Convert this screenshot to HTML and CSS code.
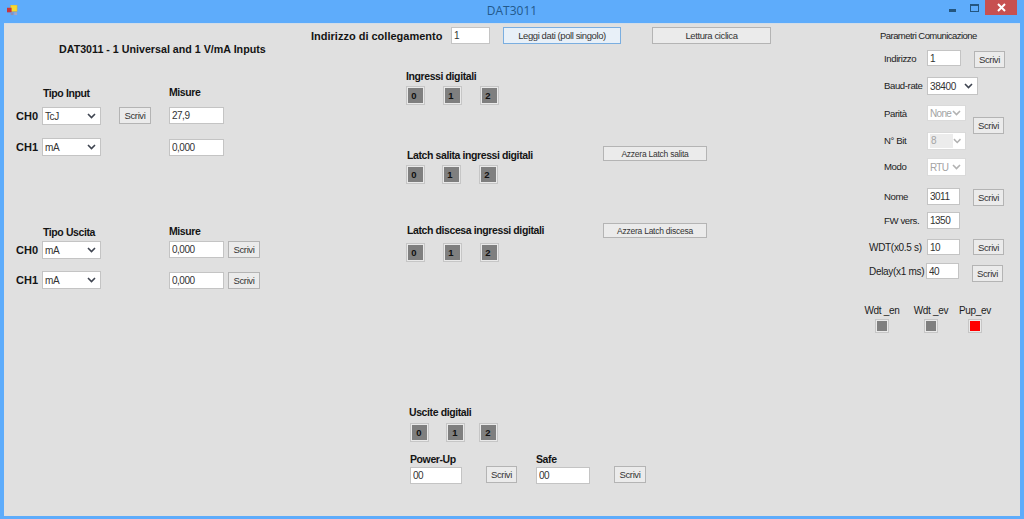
FILE: index.html
```html
<!DOCTYPE html>
<html lang="it">
<head>
<meta charset="utf-8">
<title>DAT3011</title>
<link rel="stylesheet" href="styles.css">
</head>
<body>
<svg class="defs" width="0" height="0" aria-hidden="true">
  <symbol id="chev" viewBox="0 0 9 6"><path d="M1 1 L4.5 4.5 L8 1" fill="none" stroke="currentColor" stroke-width="1.6"/></symbol>
</svg>
<div class="window">
  <header class="titlebar">
    <div class="appicon">
      <svg width="11" height="11" viewBox="0 0 12 12">
        <rect x="4" y="0" width="7" height="7" fill="#f6d92e" stroke="#c9a94a" stroke-width=".6"/>
        <rect x="0" y="3" width="5" height="5" fill="#c8343c"/>
        <rect x="4" y="8" width="3" height="3" fill="#8f8fb8"/>
        <rect x="8" y="8" width="3" height="3" fill="#a9a6c4"/>
      </svg>
    </div>
    <div class="wintitle">DAT3011</div>
    <div class="controls">
      <svg class="minimize" width="7" height="3" viewBox="0 0 7 3"><rect width="7" height="3" fill="#24567f"/></svg>
      <svg class="maximize" width="9" height="8" viewBox="0 0 9 8"><rect x=".5" y="1" width="8" height="6.500" fill="none" stroke="#24567f" stroke-width="1"/><rect width="9" height="2" fill="#24567f"/></svg>
      <div class="close">
        <svg width="9" height="9" viewBox="0 0 9 9"><path d="M1 1 L8 8 M8 1 L1 8" stroke="#fff" stroke-width="2"/></svg>
      </div>
    </div>
  </header>

  <main class="client">
    <section class="col-left">
      <h1 class="page-title">DAT3011 - 1 Universal and 1 V/mA Inputs</h1>

      <div class="chgrid in-grid">
        <div class="head c2">Tipo Input</div>
        <div class="head c4">Misure</div>

        <div class="ch">CH0</div>
        <div class="drop w59"><span>TcJ</span><svg><use href="#chev"/></svg></div>
        <button class="btn w32 ml18">Scrivi</button>
        <input class="field w55" value="27,9">
        <div></div><div></div>

        <div class="ch">CH1</div>
        <div class="drop w59"><span>mA</span><svg><use href="#chev"/></svg></div>
        <div></div>
        <input class="field w55 down1" value="0,000">
      </div>

      <div class="chgrid out-grid">
        <div class="head c2">Tipo Uscita</div>
        <div class="head c4">Misure</div>

        <div class="ch">CH0</div>
        <div class="drop w59"><span>mA</span><svg><use href="#chev"/></svg></div>
        <div></div>
        <input class="field w55" value="0,000">
        <div></div>
        <button class="btn w32">Scrivi</button>

        <div class="ch">CH1</div>
        <div class="drop w59"><span>mA</span><svg><use href="#chev"/></svg></div>
        <div></div>
        <input class="field w55 down1" value="0,000">
        <div></div>
        <button class="btn w32 down1">Scrivi</button>
      </div>
    </section>

    <section class="col-mid">
      <div class="linkbar">
        <label class="link-label">Indirizzo di collegamento</label>
        <input class="field link-addr" value="1">
        <button class="btn focused poll">Leggi dati (poll singolo)</button>
        <button class="btn cyclic">Lettura ciclica</button>
      </div>

      <div class="dig-inputs">
        <div class="head">Ingressi digitali</div>
        <div class="ledrow">
          <div class="led">0</div><div class="led">1</div><div class="led">2</div>
        </div>
      </div>

      <div class="latch-up">
        <div class="latch-head">
          <div class="head latch-title">Latch salita ingressi digitali</div>
          <button class="btn small">Azzera Latch salita</button>
        </div>
        <div class="ledrow tight">
          <div class="led">0</div><div class="led">1</div><div class="led">2</div>
        </div>
      </div>

      <div class="latch-down">
        <div class="latch-head">
          <div class="head latch-title up2">Latch discesa ingressi digitali</div>
          <button class="btn small">Azzera Latch discesa</button>
        </div>
        <div class="ledrow wide">
          <div class="led">0</div><div class="led">1</div><div class="led">2</div>
        </div>
      </div>

      <div class="dig-outputs">
        <div class="head">Uscite digitali</div>
        <div class="ledrow outs">
          <div class="led">0</div><div class="led">1</div><div class="led">2</div>
        </div>
        <div class="presets">
          <div class="preset">
            <div class="head">Power-Up</div>
            <div class="preset-row">
              <input class="field w52" value="00">
              <button class="btn w31 up1">Scrivi</button>
            </div>
          </div>
          <div class="preset">
            <div class="head">Safe</div>
            <div class="preset-row">
              <input class="field w54" value="00">
              <button class="btn w32 up1">Scrivi</button>
            </div>
          </div>
        </div>
      </div>
    </section>

    <aside class="col-right">
      <div class="params-title">Parametri Comunicazione</div>
      <div class="params">
        <div class="plabel">Indirizzo</div>
        <input class="field w34 short" value="1">
        <button class="btn w31 b-first">Scrivi</button>

        <div class="plabel">Baud-rate</div>
        <div class="drop w51"><span>38400</span><svg><use href="#chev"/></svg></div>
        <div></div>

        <div class="plabel">Parità</div>
        <div class="drop w39 off short"><span>None</span><svg><use href="#chev"/></svg></div>
        <button class="btn w31 b-comm">Scrivi</button>

        <div class="plabel">N° Bit</div>
        <div class="drop w39 off"><span class="greyed">8</span><svg><use href="#chev"/></svg></div>

        <div class="plabel">Modo</div>
        <div class="drop w39 off"><span>RTU</span><svg><use href="#chev"/></svg></div>
        <div></div>

        <div class="plabel">Nome</div>
        <input class="field w33" value="3011">
        <button class="btn w31 down1">Scrivi</button>

        <div class="plabel">FW vers.</div>
        <input class="field w33" value="1350">
        <div></div>

        <div class="plabel far">WDT(x0.5 s)</div>
        <input class="field w33 short" value="10">
        <button class="btn w31 short">Scrivi</button>

        <div class="plabel far">Delay(x1 ms)</div>
        <input class="field w33 short back1" value="40">
        <button class="btn w31 b-last">Scrivi</button>
      </div>

      <div class="flags">
        <div class="flag"><span>Wdt _en</span><i class="lamp"></i></div>
        <div class="flag"><span>Wdt _ev</span><i class="lamp"></i></div>
        <div class="flag"><span>Pup_ev</span><i class="lamp on"></i></div>
      </div>
    </aside>
  </main>
</div>
</body>
</html>
```

FILE: styles.css
```css
* { box-sizing: border-box; }

html, body { margin: 0; padding: 0; }

body {
  width: 1024px;
  height: 519px;
  overflow: hidden;
  font-family: "Liberation Sans", Arial, sans-serif;
  font-size: 10px;
  color: #1c1c1c;
}

.defs { position: absolute; }

.window {
  width: 1024px;
  height: 519px;
  background: #5eacfb;
  padding: 0 4px 3px;
  display: flex;
  flex-direction: column;
}

/* Title bar */
.titlebar {
  height: 23px;
  margin: 0 -4px;
  display: grid;
  grid-template-columns: 1fr auto 1fr;
  flex: none;
}
.appicon { padding: 5px 0 0 7px; }
.wintitle {
  font-family: "Open Sans", sans-serif;
  font-size: 12px;
  line-height: 21px;
  color: #22598c;
}
.controls {
  display: flex;
  justify-content: flex-end;
  align-items: flex-start;
  padding-right: 7px;
}
.minimize { margin-top: 9px; }
.maximize { margin: 4px 6px 0 14px; }
.close {
  width: 32px;
  height: 15px;
  background: #c75050;
  display: flex;
  align-items: center;
  justify-content: center;
}

/* Client area */
.client {
  flex: 1;
  background: #e0e0e0;
  display: flex;
  border-top: 1px solid #d2dde8;
}
.col-left { width: 302px; flex: none; padding-top: 19px; }
.col-mid { width: 554px; flex: none; padding-top: 3px; }
.col-right { flex: 1; padding-top: 6px; }

/* Shared controls */
.head, .page-title, .link-label, .ch {
  font-weight: bold;
  font-size: 10.5px;
  line-height: 12px;
  letter-spacing: -.4px;
  color: #141414;
  margin: 0;
}
.page-title { font-size: 10.7px; letter-spacing: 0; margin-left: 55px; }

.field {
  height: 17px;
  margin: 0;
  padding: 0 2px;
  background: #fff;
  border: 1px solid #c4c4c4;
  font: 10px "Liberation Sans", Arial, sans-serif;
  letter-spacing: -.5px;
  color: #333;
  outline: none;
  display: block;
}
.btn {
  height: 17px;
  padding: 0;
  background: #ebebeb;
  border: 1px solid #b4b4b4;
  font: 9.5px "Liberation Sans", Arial, sans-serif;
  letter-spacing: -.4px;
  color: #333;
  display: block;
}
.btn.focused { background: #e8f0f8; border-color: #7aaee0; }

.drop {
  height: 18px;
  background: #fff;
  border: 1px solid #c4c4c4;
  display: flex;
  align-items: center;
  justify-content: space-between;
  padding: 0 4px 0 2px;
  font-size: 10px;
  letter-spacing: -.4px;
  color: #333;
}
.drop svg { width: 9px; height: 6px; color: #3e4450; }
.drop.off { color: #a4a4a4; border-color: #dadada; letter-spacing: -.7px; }
.drop.off svg { color: #b2b2b2; }
.drop .greyed { background: #ececec; width: 24px; padding-left: 1px; line-height: 14px; }

.w31 { width: 31px; }
.w32 { width: 32px; }
.w33 { width: 33px; }
.w34 { width: 34px; }
.w39 { width: 39px; }
.w51 { width: 51px; }
.w52 { width: 52px; }
.w54 { width: 54px; }
.w55 { width: 55px; }
.w59 { width: 59px; }
.ml18 { margin-left: 18px; }
.down1 { margin-top: 1px; }
.up1 { margin-top: -1px; }
.short { height: 16px; }
.back1 { margin-left: -1px; }

/* Left column: channel grids */
.chgrid {
  display: grid;
  grid-template-columns: 26px 59px 68px 55px 4px 32px;
  justify-items: start;
  margin-left: 12px;
}
.in-grid { margin-top: 31px; grid-template-rows: 21px 31px 18px; }
.out-grid { margin-top: 69px; grid-template-rows: 16px 30px 18px; }
.head.c2 { grid-column: 2 / 4; margin: 1px 0 0 1px; }
.head.c4 { grid-column: 4 / 7; }
.ch { font-size: 11px; line-height: 18px; letter-spacing: 0; }

/* Middle column */
.linkbar { display: flex; align-items: flex-start; height: 17px; padding-left: 5px; }
.link-label { width: 140px; font-size: 11px; letter-spacing: 0; line-height: 19px; }
.link-addr { width: 39px; }
.poll { width: 118px; margin-left: 13px; }
.cyclic { width: 119px; margin-left: 31px; }

.dig-inputs { margin: 26px 0 0 100px; }
.latch-up { margin: 41px 0 0 100px; }
.latch-down { margin: 39px 0 0 100px; }
.dig-outputs { margin: 144px 0 0 103px; }

.latch-head { display: flex; align-items: flex-start; height: 15px; }
.latch-title { width: 197px; padding-left: 1px; margin-top: 3px; }
.latch-title.up2 { margin-top: 1px; }
.btn.small { width: 104px; height: 15px; font-size: 8.5px; letter-spacing: -.25px; }

.ledrow { display: flex; gap: 18px; margin-top: 4px; }
.ledrow.tight { gap: 17px; }
.ledrow.wide { margin-top: 5px; gap: 18px; }
.ledrow.outs { margin: 5px 0 0 1px; gap: 17px; }
.ledrow.outs .led:last-child { margin-left: -3px; }
.ledrow.tight .led:last-child { margin-left: 1px; }

.led {
  width: 19px;
  height: 19px;
  padding-right: 3px;
  background: #7f7f7f;
  border: 2px solid #e9e9e9;
  outline: 1px solid #c6c6c6;
  outline-offset: -1px;
  font-weight: bold;
  font-size: 9.5px;
  line-height: 15px;
  text-align: center;
  color: #111;
}
.ledrow.outs .led { padding-right: 1px; }

.presets { display: flex; margin: 11px 0 0 1px; }
.preset { width: 126px; }
.preset-row { display: flex; gap: 24px; margin-top: 2px; }

/* Right column */
.params-title { padding-left: 20px; font-size: 9.5px; line-height: 12px; letter-spacing: -.55px; }
.params {
  display: grid;
  grid-template-columns: 67px 46px 40px;
  grid-template-rows: 27px 28px 27px 26px 30px 24px 27px 24px 18px;
  align-items: start;
  margin-top: 8px;
}
.plabel { padding-left: 24px; font-size: 9.6px; line-height: 18px; letter-spacing: -.4px; }
.plabel.far { padding-left: 9px; font-size: 10px; letter-spacing: -.3px; white-space: nowrap; }
.b-first { margin-left: 1px; margin-top: 1px; }
.b-comm { margin-top: 12px; grid-row: span 2; }
.b-last { margin: 2px 0 0 -1px; }

.flags { display: flex; margin: 24px 0 0 2px; }
.flag {
  width: 40px;
  display: flex;
  flex-direction: column;
  align-items: center;
  gap: 2px;
  line-height: 12px;
  letter-spacing: -.3px;
  white-space: nowrap;
}
.flag:nth-child(2) { margin-left: 9px; }
.flag:nth-child(3) { margin-left: 4px; }
.lamp {
  display: block;
  width: 14px;
  height: 14px;
  background: #7f7f7f;
  border: 2px solid #e9e9e9;
  outline: 1px solid #c6c6c6;
  outline-offset: -1px;
}
.lamp.on { background: #f00; }
```
